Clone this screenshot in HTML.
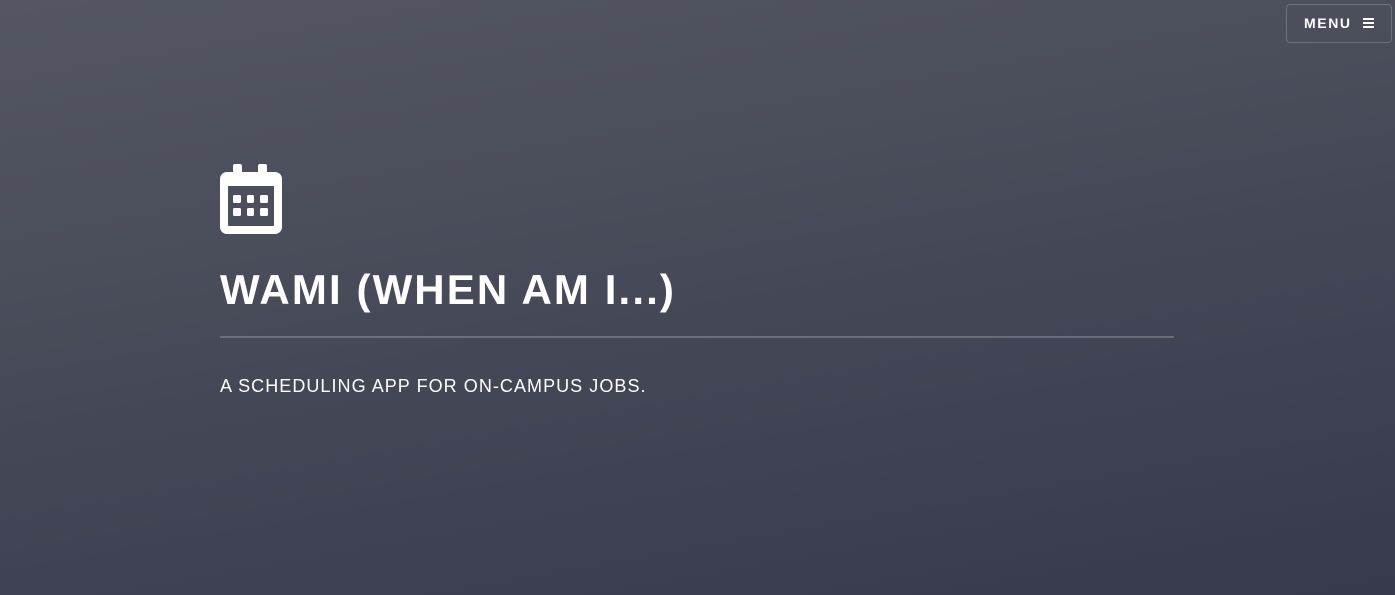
<!DOCTYPE html>
<html><head><style>
html,body{margin:0;padding:0;width:1395px;height:595px;overflow:hidden}
body{background:linear-gradient(170deg,#545663 0%,#4a4d5a 35%,#3e4252 70%,#363a4a 100%);font-family:"Liberation Sans",sans-serif;color:#fff;position:relative}
.menu{position:absolute;left:1286px;top:4px;width:106px;height:39px;border:1px solid rgba(255,255,255,0.2);border-radius:4px;box-sizing:border-box;font-weight:bold;font-size:14px;letter-spacing:1.6px;line-height:37px}
.menu span{position:absolute;left:17px;top:0}
.menu i{position:absolute;left:76px;top:13px;width:11px;height:2px;background:#fff;box-shadow:0 4px 0 #fff,0 8px 0 #fff}
svg{position:absolute;left:220px;top:164px}
h1{position:absolute;left:220px;top:266px;margin:0;font-size:42px;font-weight:bold;letter-spacing:2.1px;line-height:48px;white-space:nowrap}
.hr{position:absolute;left:220px;top:336px;width:954px;height:2px;background:rgba(255,255,255,0.22)}
p{position:absolute;left:220px;top:375px;margin:0;font-size:18px;letter-spacing:1.05px;line-height:22px;white-space:nowrap}
</style></head><body>
<div class="menu"><span>MENU</span><i></i></div>
<svg width="62" height="70" viewBox="0 0 62 70">
<rect x="13" y="0" width="9" height="14" rx="2" fill="#fff"/>
<rect x="38" y="0" width="9" height="14" rx="2" fill="#fff"/>
<path fill="#fff" fill-rule="evenodd" d="M7 8H55A7 7 0 0 1 62 15V63A7 7 0 0 1 55 70H7A7 7 0 0 1 0 63V15A7 7 0 0 1 7 8ZM8 22V61A1 1 0 0 0 9 62H53A1 1 0 0 0 54 61V22Z"/>
<g fill="#fff">
<rect x="13" y="31" width="8" height="8" rx="1.5"/><rect x="27" y="31" width="7" height="8" rx="1.5"/><rect x="40" y="31" width="8" height="8" rx="1.5"/>
<rect x="13" y="44" width="8" height="8" rx="1.5"/><rect x="27" y="44" width="7" height="8" rx="1.5"/><rect x="40" y="44" width="8" height="8" rx="1.5"/>
</g>
</svg>
<h1>WAMI (WHEN AM I...)</h1>
<div class="hr"></div>
<p>A SCHEDULING APP FOR ON-CAMPUS JOBS.</p>
</body></html>
